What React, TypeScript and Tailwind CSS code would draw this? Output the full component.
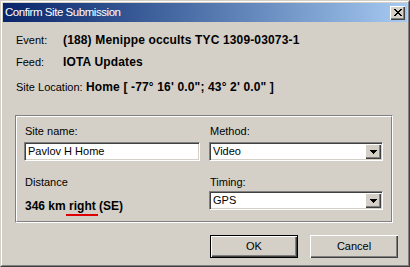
import React from 'react';

const raised =
  'shadow-[inset_1px_1px_0_#ffffff,inset_-1px_-1px_0_#404040,inset_-2px_-2px_0_#808080]';
const sunken =
  'border border-t-[#808080] border-l-[#808080] border-r-white border-b-white shadow-[inset_1px_1px_0_#404040,inset_-1px_-1px_0_#d4d0c8]';

function Arrow() {
  return (
    <svg width="7" height="4" viewBox="0 0 7 4" shapeRendering="crispEdges">
      <path d="M0 0h7v1H0zM1 1h5v1H1zM2 2h3v1H2zM3 3h1v1H3z" fill="#000" />
    </svg>
  );
}

function Combo({ value }: { value: string }) {
  return (
    <div className={`flex h-[19px] items-stretch bg-white p-[1px] ${sunken}`}>
      <span className="flex flex-1 items-center pl-[2px] text-[11px] leading-[13px]">{value}</span>
      <div className={`flex w-[16px] items-center justify-center bg-[#d4d0c8] ${raised}`}>
        <Arrow />
      </div>
    </div>
  );
}

function Row({ label, value, labelWidth }: { label: string; value: string; labelWidth: string }) {
  return (
    <div className="flex h-[22px] items-center">
      <span className={`${labelWidth} text-[11px]`}>{label}</span>
      <span className="text-[12px] font-bold tracking-[0.15px]">{value}</span>
    </div>
  );
}

export default function App() {
  return (
    <div className="h-[267px] w-[410px] border border-t-[#d4d0c8] border-l-[#d4d0c8] border-r-[#404040] border-b-[#404040] font-['Liberation_Sans',Arial,sans-serif] text-black">
      <div className="flex h-full flex-col border border-t-white border-l-white border-r-[#808080] border-b-[#808080] bg-[#d4d0c8] p-[1px]">
        {/* Title bar */}
        <div className="flex h-[19px] items-center bg-gradient-to-r from-[#0a246a] to-[#a6caf0] pl-[2px] pr-[2px]">
          <span className="flex-1 text-[11.5px] tracking-[-0.45px] text-white">Confirm Site Submission</span>
          <div className={`flex h-[14px] w-[15px] items-center justify-center bg-[#d4d0c8] ${raised}`}>
            <svg width="8" height="7" viewBox="0 0 8 7" shapeRendering="crispEdges">
              <path d="M0 0h2v1H0zM6 0h2v1H6zM1 1h2v1H1zM5 1h2v1H5zM2 2h4v1H2zM3 3h2v1H3zM2 4h4v1H2zM1 5h2v1H1zM5 5h2v1H5zM0 6h2v1H0zM6 6h2v1H6z" fill="#000" />
            </svg>
          </div>
        </div>

        {/* Details */}
        <div className="flex flex-col pl-[13px] pt-[7px]">
          <Row label="Event:" value="(188) Menippe occults TYC 1309-03073-1" labelWidth="w-[47px]" />
          <Row label="Feed:" value="IOTA Updates" labelWidth="w-[47px]" />
          <div className="mt-[3px]">
            <Row label="Site Location:" value={'Home [ -77° 16\' 0.0"; 43° 2\' 0.0" ]'} labelWidth="w-[70px]" />
          </div>
        </div>

        {/* Group box */}
        <div className="ml-[12px] mr-[14px] mt-[17px] border border-t-[#808080] border-l-[#808080] border-r-white border-b-white">
          <div className="grid grid-cols-[176px_174px] gap-x-[9px] border border-t-white border-l-white border-r-[#808080] border-b-[#808080] pb-[8px] pl-[7px] pt-[7px]">
            <div className="flex flex-col">
              <span className="pl-[1px] text-[11px] leading-[14px]">Site name:</span>
              <div className={`mt-[4px] flex h-[19px] items-center bg-white pl-[3px] text-[11px] ${sunken}`}>
                Pavlov H Home
              </div>
            </div>
            <div className="flex flex-col">
              <span className="pl-[1px] text-[11px] leading-[14px]">Method:</span>
              <div className="mt-[4px]">
                <Combo value="Video" />
              </div>
            </div>
            <div className="mt-[14px] flex flex-col">
              <span className="pl-[1px] text-[11px] leading-[14px]">Distance</span>
              <span className="mt-[10px] pl-[1px] text-[12px] font-bold leading-[14px]">
                346 km{' '}
                <span className="relative">
                  right
                  <span className="absolute bottom-[-3px] left-[-3px] right-[-2px] h-[2px] bg-[#e00000]" />
                </span>{' '}
                (SE)
              </span>
            </div>
            <div className="mt-[14px] flex flex-col">
              <span className="pl-[1px] text-[11px] leading-[14px]">Timing:</span>
              <div className="mt-[2px]">
                <Combo value="GPS" />
              </div>
            </div>
          </div>
        </div>

        {/* Buttons */}
        <div className="mt-[12px] flex justify-end gap-[12px] pr-[9px]">
          <button className="h-[23px] w-[88px] border border-black bg-[#d4d0c8] p-0">
            <div className={`flex h-full w-full items-center justify-center text-[11px] ${raised}`}>OK</div>
          </button>
          <button className={`flex h-[23px] w-[88px] items-center justify-center bg-[#d4d0c8] text-[11px] ${raised}`}>
            Cancel
          </button>
        </div>
      </div>
    </div>
  );
}
